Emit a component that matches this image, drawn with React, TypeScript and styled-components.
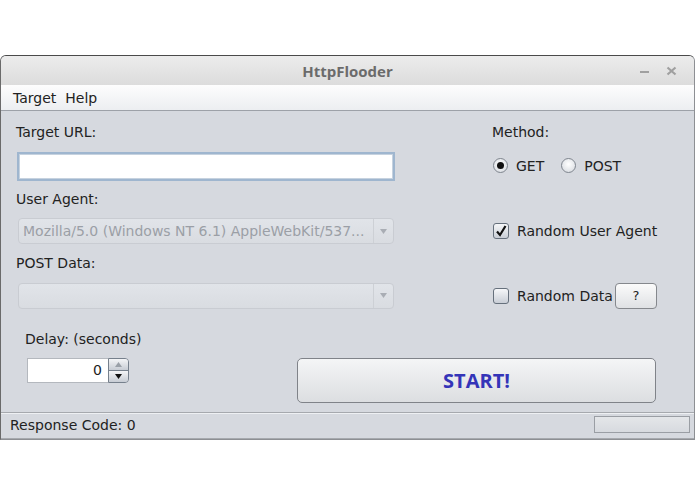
import React, { useState } from 'react'
import styled, { createGlobalStyle, css } from 'styled-components'

const GlobalStyle = createGlobalStyle`
  html, body {
    margin: 0;
    padding: 0;
    background: #ffffff;
  }
  body {
    font-family: 'DejaVu Sans', sans-serif;
    font-size: 14px;
    color: #1e1e1e;
  }
`

const Page = styled.div`
  width: 695px;
  height: 494px;
  padding-top: 55px;
  box-sizing: border-box;
`

const Window = styled.div`
  width: 695px;
  box-sizing: border-box;
  border: 1px solid #8d8f93;
  border-top-color: #4a4a4a;
  border-left-color: #6a6a6a;
  border-radius: 6px 6px 0 0;
  overflow: hidden;
  background: #d6d9df;
`

const TitleBar = styled.div`
  height: 29px;
  display: flex;
  align-items: center;
  justify-content: center;
  position: relative;
  background: linear-gradient(#ececec, #dcdcdc);
`

const Title = styled.div`
  font-family: 'Open Sans', sans-serif;
  font-weight: 700;
  font-size: 15px;
  color: #6b6b6b;
`

const WinControls = styled.div`
  position: absolute;
  right: 17px;
  top: 0;
  height: 29px;
  display: flex;
  align-items: center;
  gap: 16px;
  color: #9a9a9a;
`

const MenuBar = styled.div`
  height: 25px;
  display: flex;
  align-items: center;
  padding-left: 12px;
  gap: 9px;
  background: linear-gradient(#fdfdfd, #eceef1);
  border-bottom: 1px solid #9da1a8;
`

const MenuItem = styled.span`
  font-size: 14px;
  color: #222;
`

const Form = styled.div`
  display: grid;
  grid-template-columns: 380px 1fr;
  grid-template-rows: 20px 29px 20px 26px 20px 27px;
  row-gap: 9px;
  column-gap: 96px;
  padding: 11px 0 0 15px;
  align-items: center;
`

const Label = styled.div`
  font-size: 14px;
  color: #222;
  white-space: nowrap;
`

const TextField = styled.input`
  margin-left: 1px;
  margin-top: 2px;
  width: 378px;
  height: 29px;
  box-sizing: border-box;
  border: 2px solid #9fb6cf;
  outline: 1px solid #c6d2df;
  outline-offset: -3px;
  background: #ffffff;
  font-family: 'DejaVu Sans', sans-serif;
  font-size: 14px;
`

const Combo = styled.div`
  margin-left: 2px;
  width: 376px;
  height: 26px;
  box-sizing: border-box;
  display: flex;
  align-items: center;
  border: 1px solid #c9ccd2;
  border-radius: 4px;
  background: linear-gradient(#e1e4e9, #d9dce1);
  overflow: hidden;
`

const ComboText = styled.div`
  flex: 1;
  padding-left: 4px;
  color: #9b9fa6;
  font-size: 14px;
  white-space: nowrap;
`

const ComboArrow = styled.div`
  width: 19px;
  height: 100%;
  border-left: 1px solid #cdd0d5;
  display: flex;
  align-items: center;
  justify-content: center;
`

const Option = styled.label`
  display: flex;
  align-items: center;
  gap: 8px;
  font-size: 14px;
  color: #222;
  white-space: nowrap;
`

const Radios = styled.div`
  display: flex;
  align-items: center;
  gap: 17px;
  padding-left: 1px;
`

const RadioMark = styled.span<{ $on?: boolean }>`
  width: 15px;
  height: 15px;
  box-sizing: border-box;
  border-radius: 50%;
  border: 1px solid #7f858e;
  background: radial-gradient(circle at 50% 40%, #ffffff, #d3d7dd);
  display: flex;
  align-items: center;
  justify-content: center;
  ${(p) =>
    p.$on &&
    css`
      &::after {
        content: '';
        width: 7px;
        height: 7px;
        border-radius: 50%;
        background: #111;
      }
    `}
`

const CheckMark = styled.span`
  width: 16px;
  height: 16px;
  box-sizing: border-box;
  border-radius: 3px;
  border: 1px solid #66707c;
  background: linear-gradient(#f6f7f9, #c9ced6);
  display: flex;
  align-items: center;
  justify-content: center;
`

const CheckRow = styled.div`
  display: flex;
  align-items: center;
  gap: 2px;
  padding-left: 1px;
`

const SmallButton = styled.button`
  width: 42px;
  height: 26px;
  border: 1px solid #85888d;
  border-radius: 4px;
  background: linear-gradient(#fbfbfb, #dfe1e4);
  font-family: 'DejaVu Sans', sans-serif;
  font-size: 13px;
  color: #222;
  padding: 0;
`

const Bottom = styled.div`
  display: grid;
  grid-template-columns: 272px 359px;
  padding: 19px 0 9px 24px;
`

const DelayBlock = styled.div`
  display: flex;
  flex-direction: column;
  gap: 11px;
  padding-top: 3px;
`

const Spinner = styled.div`
  margin-left: 2px;
  display: flex;
  height: 25px;
  width: 102px;
`

const SpinField = styled.div`
  width: 81px;
  box-sizing: border-box;
  background: #fff;
  border: 1px solid #b4b8be;
  border-right: none;
  text-align: right;
  padding-right: 6px;
  line-height: 23px;
  font-size: 14px;
`

const SpinButtons = styled.div`
  width: 21px;
  box-sizing: border-box;
  border: 1px solid #76808c;
  border-radius: 0 4px 4px 0;
  display: flex;
  flex-direction: column;
  overflow: hidden;
`

const SpinHalf = styled.div<{ $bottom?: boolean }>`
  flex: 1;
  display: flex;
  align-items: center;
  justify-content: center;
  background: linear-gradient(#f4f5f7, #c7ccd4);
  ${(p) => p.$bottom && css`border-top: 1px solid #76808c;`}
`

const StartButton = styled.button`
  margin-top: 30px;
  height: 45px;
  border: 1px solid #808389;
  border-radius: 5px;
  background: linear-gradient(#f4f5f6, #dcdee1);
  font-family: 'Open Sans', sans-serif;
  font-weight: 700;
  font-size: 20px;
  color: #3434b8;
  padding: 0;
`

const StatusBar = styled.div`
  height: 27px;
  display: flex;
  align-items: center;
  justify-content: space-between;
  padding: 0 4px 2px 9px;
  box-sizing: border-box;
  border-top: 1px solid #a6a9ae;
  box-shadow: inset 0 1px 0 #eef0f3;
  background: #d6d9df;
  border-bottom: 1px solid #a6a9ae;
`

const Progress = styled.div`
  width: 96px;
  height: 17px;
  box-sizing: border-box;
  border: 1px solid #9a9ea4;
  background: linear-gradient(#e4e6e9, #d7dadf);
`

const Triangle = ({ up, color }: { up?: boolean; color: string }) => (
  <svg width="7" height="5" viewBox="0 0 7 5">
    <path d={up ? 'M0 5 L3.5 0 L7 5 Z' : 'M0 0 L7 0 L3.5 5 Z'} fill={color} />
  </svg>
)

const App = () => {
  const [method, setMethod] = useState<'GET' | 'POST'>('GET')
  const [delay] = useState(0)

  return (
    <Page>
      <GlobalStyle />
      <Window>
        <TitleBar>
          <Title>HttpFlooder</Title>
          <WinControls>
            <svg width="11" height="10" viewBox="0 0 11 10">
              <rect x="1" y="5" width="9" height="2" fill="#a0a0a0" />
            </svg>
            <svg width="11" height="10" viewBox="0 0 11 10">
              <path d="M1.5 1.5 L9.5 8.5 M9.5 1.5 L1.5 8.5" stroke="#a0a0a0" strokeWidth="2.2" />
            </svg>
          </WinControls>
        </TitleBar>
        <MenuBar>
          <MenuItem>Target</MenuItem>
          <MenuItem>Help</MenuItem>
        </MenuBar>
        <Form>
          <Label>Target URL:</Label>
          <Label>Method:</Label>

          <TextField />
          <Radios>
            <Option onClick={() => setMethod('GET')}>
              <RadioMark $on={method === 'GET'} />
              GET
            </Option>
            <Option onClick={() => setMethod('POST')}>
              <RadioMark $on={method === 'POST'} />
              POST
            </Option>
          </Radios>

          <Label>User Agent:</Label>
          <div />

          <Combo>
            <ComboText>Mozilla/5.0 (Windows NT 6.1) AppleWebKit/537...</ComboText>
            <ComboArrow>
              <Triangle color="#a9adb4" />
            </ComboArrow>
          </Combo>
          <CheckRow>
            <Option>
              <CheckMark>
                <svg width="12" height="12" viewBox="0 0 12 12">
                  <path d="M2 6.5 L5 10 L10.5 1" stroke="#111" strokeWidth="2.2" fill="none" />
                </svg>
              </CheckMark>
              Random User Agent
            </Option>
          </CheckRow>

          <Label>POST Data:</Label>
          <div />

          <Combo>
            <ComboText />
            <ComboArrow>
              <Triangle color="#a9adb4" />
            </ComboArrow>
          </Combo>
          <CheckRow>
            <Option>
              <CheckMark />
              Random Data
            </Option>
            <SmallButton>?</SmallButton>
          </CheckRow>
        </Form>
        <Bottom>
          <DelayBlock>
            <Label>Delay: (seconds)</Label>
            <Spinner>
              <SpinField>{delay}</SpinField>
              <SpinButtons>
                <SpinHalf>
                  <Triangle up color="#9aa0a8" />
                </SpinHalf>
                <SpinHalf $bottom>
                  <Triangle color="#111" />
                </SpinHalf>
              </SpinButtons>
            </Spinner>
          </DelayBlock>
          <StartButton>START!</StartButton>
        </Bottom>
        <StatusBar>
          <Label>Response Code: 0</Label>
          <Progress />
        </StatusBar>
      </Window>
    </Page>
  )
}

export default App
